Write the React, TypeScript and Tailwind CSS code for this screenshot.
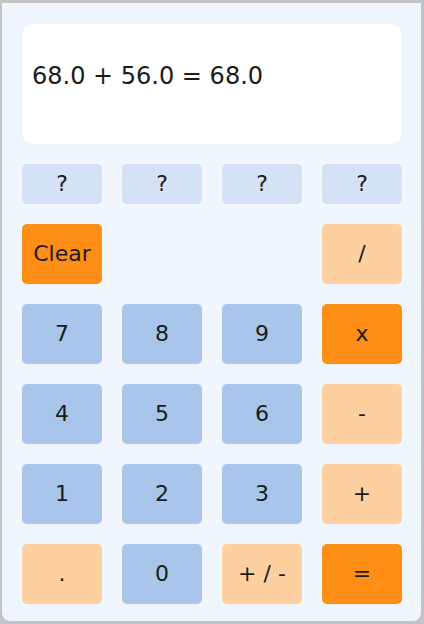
import React from "react";

type Key = { label: string; tone: "q" | "blue" | "peach" | "orange" | "none" };

const rows: Key[][] = [
  [
    { label: "?", tone: "q" },
    { label: "?", tone: "q" },
    { label: "?", tone: "q" },
    { label: "?", tone: "q" },
  ],
  [
    { label: "Clear", tone: "orange" },
    { label: "", tone: "none" },
    { label: "", tone: "none" },
    { label: "/", tone: "peach" },
  ],
  [
    { label: "7", tone: "blue" },
    { label: "8", tone: "blue" },
    { label: "9", tone: "blue" },
    { label: "x", tone: "orange" },
  ],
  [
    { label: "4", tone: "blue" },
    { label: "5", tone: "blue" },
    { label: "6", tone: "blue" },
    { label: "-", tone: "peach" },
  ],
  [
    { label: "1", tone: "blue" },
    { label: "2", tone: "blue" },
    { label: "3", tone: "blue" },
    { label: "+", tone: "peach" },
  ],
  [
    { label: ".", tone: "peach" },
    { label: "0", tone: "blue" },
    { label: "+ / -", tone: "peach" },
    { label: "=", tone: "orange" },
  ],
];

const toneClass: Record<Key["tone"], string> = {
  q: "bg-[#d5e2f5]",
  blue: "bg-[#a9c5eb]",
  peach: "bg-[#ffd09f]",
  orange: "bg-[#fe8e15]",
  none: "",
};

const App = () => {
  return (
    <div className="w-[424px] h-[624px] bg-[#c4c4c4] pt-[3px] pl-[2px] pr-[3px] pb-[3px] font-['DejaVu_Sans',sans-serif] text-[#1b1b1b]">
      <div className="h-full bg-[#f0f6fe] rounded-b-[8px] pl-[20px] pt-[21px]">
        <div className="w-[380px] h-[120px] bg-white rounded-[12px] pl-[10px] pt-[38px] text-[24px] leading-[28px]">
          68.0 + 56.0 = 68.0
        </div>
        <div className="flex flex-col gap-5 mt-5 w-[380px]">
          {rows.map((row, i) => (
            <div key={i} className="grid grid-cols-4 gap-5">
              {row.map((k, j) =>
                k.tone === "none" ? (
                  <div key={j} />
                ) : (
                  <div
                    key={j}
                    className={`${toneClass[k.tone]} ${
                      i === 0 ? "h-10" : "h-[60px]"
                    } rounded-[5px] flex items-center justify-center text-[22px] leading-none whitespace-pre`}
                  >
                    {k.label}
                  </div>
                )
              )}
            </div>
          ))}
        </div>
      </div>
    </div>
  );
};

export default App;
